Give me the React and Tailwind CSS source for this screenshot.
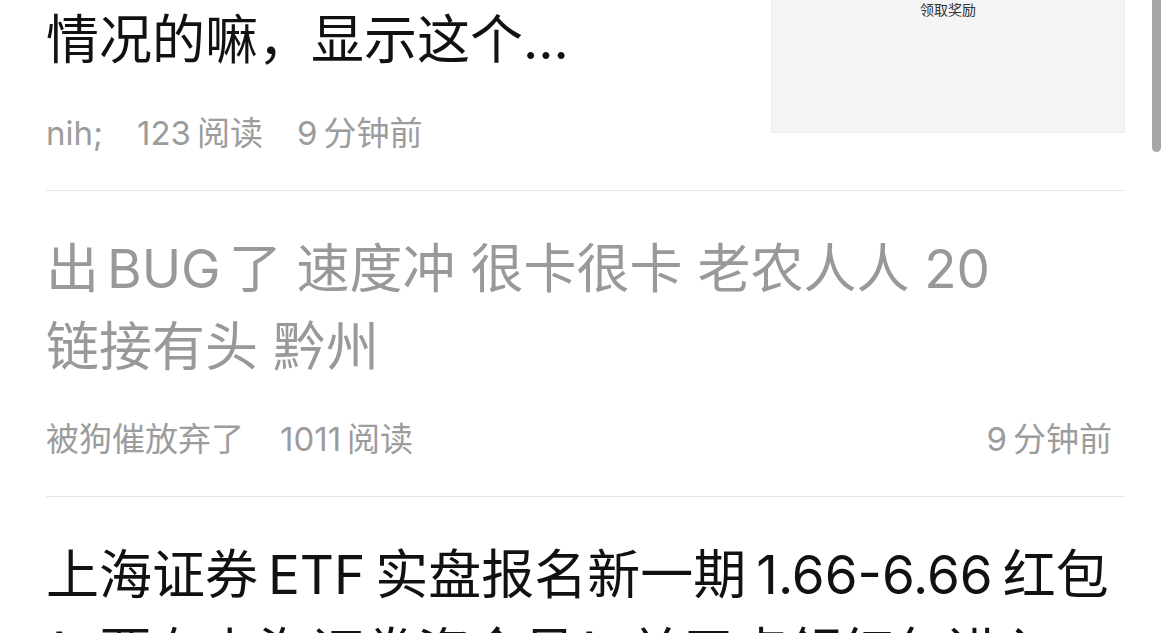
import React from "react"

const FONT = { fontFamily: 'Inter, "Noto Sans CJK SC", "Noto Sans", sans-serif' }

function Meta({ children, className = "" }) {
  return (
    <div className={`flex items-center gap-[34px] text-[33px] leading-[44px] text-[#9c9c9c] ${className}`}>
      {children}
    </div>
  )
}

// latin run inside CJK text gets a bit of air on each side
function L({ children, wide }) {
  return <span className={wide ? "mx-[10px]" : "mx-[8px]"}>{children}</span>
}

function Num({ n, unit }) {
  return (
    <span>
      <span className="mr-[6px]">{n}</span>
      {unit}
    </span>
  )
}

function Title({ lines, muted }) {
  return (
    <div className={`text-[53px] leading-[78px] ${muted ? "text-[#999999]" : "text-[#111111]"}`}>
      {lines.map((l, i) => (
        <div key={i} className="whitespace-nowrap overflow-hidden">
          {l}
        </div>
      ))}
    </div>
  )
}

export default function App() {
  return (
    <div className="relative h-[633px] w-[1164px] overflow-hidden bg-white" style={FONT}>
      <div className="-mt-[77px] pl-[46px] pr-[39px]">
        {/* item 1 : title + image */}
        <div className="flex gap-[20px] border-b border-[#e6e6e6] pb-[35px]">
          <div className="flex-1 min-w-0">
            <Title lines={["有没有人遇到过这种", "情况的嘛，显示这个..."]} />
            <Meta className="mt-[32px]">
              <span>nih;</span>
              <Num n="123" unit="阅读" />
              <Num n="9" unit="分钟前" />
            </Meta>
          </div>
          <div className="mt-[5px] h-[205px] w-[354px] shrink-0 border border-[#ededed] bg-[#f5f5f5]">
            <div className="mt-[72px] text-center text-[14px] leading-[18px] text-[#333333]">领取奖励</div>
          </div>
        </div>

        {/* item 2 */}
        <div className="border-b border-[#e6e6e6] pt-[39px] pb-[35px]">
          <Title
            muted
            lines={[
              <>出<L>BUG</L>了 速度冲 很卡很卡 老农人人 20</>,
              "链接有头 黔州",
            ]}
          />
          <Meta className="mt-[31px] justify-between pr-[13px]">
            <div className="flex gap-[36px]">
              <span>被狗催放弃了</span>
              <Num n="1011" unit="阅读" />
            </div>
            <Num n="9" unit="分钟前" />
          </Meta>
        </div>

        {/* item 3 */}
        <div className="pt-[39px]">
          <Title
            lines={[
              <>上海证券<L wide>ETF</L>实盘报名新一期<L wide>1.66-6.66</L>红包</>,
              "！要有上海证券资金号！关于点领红包进入",
            ]}
          />
        </div>
      </div>

      {/* scroll indicator */}
      <div className="absolute right-[3px] top-0 h-[152px] w-[9px] rounded-b-full bg-[#a6a6a6]" />
    </div>
  )
}
